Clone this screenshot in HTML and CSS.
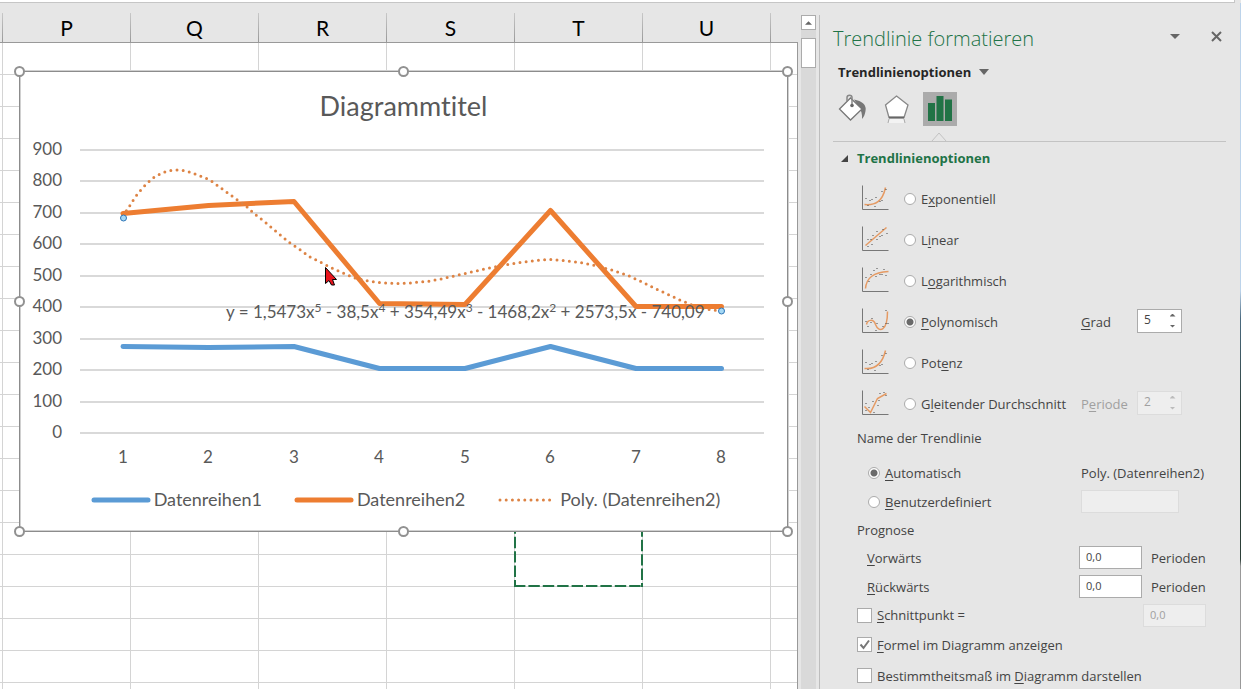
FILE: index.html
```html
<!DOCTYPE html>
<html lang="de">
<head>
<meta charset="utf-8">
<title>Trendlinie formatieren</title>
<link rel="stylesheet" href="styles.css">
</head>
<body>
<div class="app">
  <div class="formula-strip"></div>
  <div class="workspace">
    <main class="sheet">
      <div class="columns">
        <span class="col">P</span><span class="col">Q</span><span class="col">R</span><span class="col">S</span><span class="col">T</span><span class="col">U</span><span class="col"></span>
      </div>
      <div class="cells">
        <svg class="marquee" viewBox="0 0 132 76" aria-hidden="true">
          <path d="M2 0V74" stroke-dasharray="11.400 3" stroke-dashoffset="5"/>
          <path d="M1 73H130" stroke-dasharray="11.400 3"/>
          <path d="M129 0V74" stroke-dasharray="11.400 3" stroke-dashoffset="2"/>
        </svg>
        <section class="chart" aria-label="Diagramm">
          <h2 class="chart-title">Diagrammtitel</h2>
          <svg class="plot" viewBox="20 136 767 340">
            <g class="gridlines">
              <path d="M80 150H764M80 181H764M80 213H764M80 244H764M80 276H764M80 307H764M80 339H764M80 370H764M80 402H764M80 433H764"/>
            </g>
            <g class="axis axis-y">
              <text x="62" y="155">900</text><text x="62" y="186">800</text><text x="62" y="218">700</text><text x="62" y="249">600</text><text x="62" y="281">500</text><text x="62" y="312">400</text><text x="62" y="344">300</text><text x="62" y="375">200</text><text x="62" y="407">100</text><text x="62" y="438">0</text>
            </g>
            <g class="axis axis-x">
              <text x="123" y="463">1</text><text x="208" y="463">2</text><text x="294" y="463">3</text><text x="379" y="463">4</text><text x="465" y="463">5</text><text x="550" y="463">6</text><text x="636" y="463">7</text><text x="721" y="463">8</text>
            </g>
            <polyline class="series blue" points="123,346.5 208.5,347.5 294,346.5 379.5,368.5 465,368.5 550.5,346.5 636,368.5 721.5,368.5"/>
            <polyline class="series orange" points="123,213.5 208.5,205.5 294,201.5 379.5,303.5 465,304.5 550.5,210.5 636,306.5 721.5,306.5"/>
            <polyline class="trend" points="123,216 125.5,212 129,207 132,202 136,196 140,191 144,186.5 148,182.5 153,178 158,175 163,172.5 169,170.7 176,170 182,170.3 188,171.5 199,175.5 210,180 225,191 236,199 246,206 254,213.5 265,222 275,230.5 290,243 299,249 310,257 321,262.5 332,268 343,273 355,278 367,280.7 380,282.7 398,283.5 409,283 427,281.5 441,279 465,273.5 488,268.3 505,265 520,262.5 537,260.3 550,259.5 562,260.3 580,262.5 593,265 610,269.5 627,275 642,282 654,288 666,293.5 680,300 692,305 705,309 721,311"/>
            <text class="equation" x="226" y="318">y = 1,5473x<tspan class="sup" dy="-6">5</tspan><tspan dy="6"> - 38,5x</tspan><tspan class="sup" dy="-6">4</tspan><tspan dy="6"> + 354,49x</tspan><tspan class="sup" dy="-6">3</tspan><tspan dy="6"> - 1468,2x</tspan><tspan class="sup" dy="-6">2</tspan><tspan dy="6"> + 2573,5x - 740,09</tspan></text>
            <circle class="endpoint" cx="123.5" cy="218" r="3"/>
            <circle class="endpoint" cx="721.5" cy="311" r="3"/>
            <path class="pointer" d="M325.500 267.500V283.500L329 280.500L331.500 285H334.500L332.500 279.500H336.500Z"/>
          </svg>
          <div class="legend">
            <span class="entry"><svg class="key" viewBox="0 0 60 6"><path class="series blue" d="M3 3H57"/></svg>Datenreihen1</span>
            <span class="entry"><svg class="key" viewBox="0 0 60 6"><path class="series orange" d="M3 3H57"/></svg>Datenreihen2</span>
            <span class="entry"><svg class="key" viewBox="0 0 60 6"><path class="trend" d="M3 3H56"/></svg>Poly. (Datenreihen2)</span>
          </div>
          <i class="handle top left"></i><i class="handle top center"></i><i class="handle top right"></i>
          <i class="handle middle left"></i><i class="handle middle right"></i>
          <i class="handle bottom left"></i><i class="handle bottom center"></i><i class="handle bottom right"></i>
        </section>
      </div>
    </main>
    <div class="scrollbar">
      <button class="scroll-up" type="button" aria-label="Nach oben"><svg viewBox="0 0 8 4"><path d="M0 4L4 0L8 4Z"/></svg></button>
      <div class="thumb"></div>
    </div>
    <aside class="pane">
      <header class="pane-head">
        <h1>Trendlinie formatieren</h1>
        <button class="menu-btn" type="button" aria-label="Optionen"><svg width="10" height="6" viewBox="0 0 10 6"><path d="M0 0H10L5 5Z" fill="#666"/></svg></button>
        <button class="close-btn" type="button" aria-label="Schließen"><svg width="11" height="11" viewBox="0 0 11 11"><path d="M1 1L10 10M10 1L1 10" stroke="#666" stroke-width="2"/></svg></button>
      </header>
      <button class="category" type="button">Trendlinienoptionen <svg width="10" height="7" viewBox="0 0 10 7"><path d="M0 0H10L5 6Z" fill="#666"/></svg></button>
      <nav class="tabs">
        <button class="tab" type="button" aria-label="Füllung und Linie">
          <svg width="34" height="34" viewBox="-2 0 34 34">
            <path d="M17 7.500C25 9 30 13 28.500 19C28 22 27 25 25 27C25.500 22 24 18 22 15Z" fill="#777"/>
            <path d="M13.500 6L25 17L13.500 28L2.500 17Z" fill="#fff" stroke="#777" stroke-width="1.300"/>
            <path d="M10 10V5.500C10 2.500 15 2.500 15 5.500V13" fill="none" stroke="#888" stroke-width="1.500"/>
            <circle cx="15" cy="13.500" r="1.800" fill="#666"/>
          </svg>
        </button>
        <button class="tab" type="button" aria-label="Effekte">
          <svg width="34" height="34" viewBox="-1 0 34 34">
            <path d="M9.500 26L8.500 31H24.500L23.500 26Z" fill="#f3f3f3"/>
            <path d="M9 27L8 31M24 27L25 31" stroke="#aaa"/>
            <path d="M16.500 4L28 13L24 25.500H9L5.500 13Z" fill="#fff" stroke="#888" stroke-width="1.300"/>
            <path d="M9 25.500H24" stroke="#666" stroke-width="2"/>
          </svg>
        </button>
        <button class="tab active" type="button" aria-label="Trendlinienoptionen">
          <svg width="34" height="34" viewBox="0 0 34 34"><path d="M5 11H12V29H5ZM13.500 4H20.500V29H13.500ZM22 7.500H29V29H22Z" fill="#217346"/></svg>
        </button>
      </nav>
      <svg class="notch" viewBox="0 0 16 10" aria-hidden="true"><path d="M1 9L8 1L15 9" /></svg>
      <button class="section-head" type="button"><svg width="7" height="7" viewBox="0 0 7 7"><path d="M7 0V7H0Z" fill="#444"/></svg>Trendlinienoptionen</button>

      <div class="types">
        <div class="type-row">
          <svg class="mini" viewBox="-0.500 -0.500 27 26"><path class="ax" d="M1 1V25H27"/><path class="cv" d="M3 20C14 21 21 17 24 3"/><path class="dt" d="M4 14h1M8 16h1M10 15h1M14 13h1M6 21h1M13 22h1M18 17h1M20 7h1M20 16h1M24 5h1"/></svg>
          <label><input type="radio" name="type"><span>E<u>x</u>ponentiell</span></label>
        </div>
        <div class="type-row">
          <svg class="mini" viewBox="-0.500 -0.500 27 26"><path class="ax" d="M1 1V25H27"/><path class="cv" d="M4 20L25 2"/><path class="dt" d="M6 14h1M9 14h1M11 10h1M15 6h1M6 21h1M10 19h1M15 14h1M18 11h1M20 10h1M21 4h1M25 8h1"/></svg>
          <label><input type="radio" name="type"><span>L<u>i</u>near</span></label>
        </div>
        <div class="type-row">
          <svg class="mini" viewBox="-0.500 -0.500 27 26"><path class="ax" d="M1 1V25H27"/><path class="cv" d="M4 22C5 11 12 6 27 5"/><path class="dt" d="M4 11h1M7 15h1M9 8h1M12 4h1M15 2h1M14 10h1M18 8h1M20 8h1M22 3h1M24 9h1"/></svg>
          <label><input type="radio" name="type"><span>L<u>o</u>garithmisch</span></label>
        </div>
        <div class="type-row">
          <svg class="mini" viewBox="-0.500 -0.500 27 26"><path class="ax" d="M1 1V25H27"/><path class="cv" d="M5 17C6 12 12 11 14 17C17 25 26 25 26 4"/><path class="dt" d="M4 14h1M6 19h1M10 11h1M9 15h1M15 16h1M14 23h1M21 19h1M24 16h1M24 3h1M27 16h-1"/></svg>
          <label><input type="radio" name="type" checked><span><u>P</u>olynomisch</span></label>
          <label class="side" for="grad"><u>G</u>rad</label>
          <div class="stepper"><input id="grad" type="text" value="5"><button class="up" type="button" aria-label="Mehr"></button><button class="down" type="button" aria-label="Weniger"></button></div>
        </div>
        <div class="type-row">
          <svg class="mini" viewBox="-0.500 -0.500 27 26"><path class="ax" d="M1 1V25H27"/><path class="cv" d="M3 20C14 21 21 15 24 2"/><path class="dt" d="M4 14h1M8 16h1M10 15h1M14 13h1M6 21h1M13 22h1M18 17h1M20 7h1M20 16h1M24 5h1"/></svg>
          <label><input type="radio" name="type"><span>Pot<u>e</u>nz</span></label>
        </div>
        <div class="type-row">
          <svg class="mini" viewBox="-0.500 -0.500 27 26"><path class="ax" d="M1 1V25H27"/><path class="cv" d="M3 17L9 23L16 9L25 4"/><path class="dt" d="M4 14h1M7 18h1M4 21h1M11 12h1M12 23h1M16 16h1M17 11h1M18 4h1M22 3h1M24 6h1"/></svg>
          <label><input type="radio" name="type"><span>G<u>l</u>eitender Durchschnitt</span></label>
          <label class="side off" for="periode">P<u>e</u>riode</label>
          <div class="stepper off"><input id="periode" type="text" value="2" disabled><button class="up" type="button" aria-label="Mehr" disabled></button><button class="down" type="button" aria-label="Weniger" disabled></button></div>
        </div>
      </div>

      <h3 class="group">Name der Trendlinie</h3>
      <div class="rows name-rows">
        <div class="row">
          <label><input type="radio" name="name" checked><span><u>A</u>utomatisch</span></label>
          <span class="auto-name">Poly. (Datenreihen2)</span>
        </div>
        <div class="row">
          <label><input type="radio" name="name"><span><u>B</u>enutzerdefiniert</span></label>
          <input class="box custom-name" type="text" aria-label="Name" disabled>
        </div>
      </div>
      <h3 class="group forecast">Prognose</h3>
      <div class="rows">
        <div class="row"><label for="vor"><span><u>V</u>orwärts</span></label><input class="box" id="vor" type="text" value="0,0"><span class="unit">Perioden</span></div>
        <div class="row"><label for="rueck"><span><u>R</u>ückwärts</span></label><input class="box" id="rueck" type="text" value="0,0"><span class="unit">Perioden</span></div>
      </div>
      <div class="checks">
        <div class="check-row first"><label><input type="checkbox"><span><u>S</u>chnittpunkt =</span></label><input class="box" type="text" value="0,0" aria-label="Schnittpunkt" disabled></div>
        <div class="check-row"><label><input type="checkbox" checked><span><u>F</u>ormel im Diagramm anzeigen</span></label></div>
        <div class="check-row"><label><input type="checkbox"><span>Bestimmtheitsmaß im <u>D</u>iagramm darstellen</span></label></div>
      </div>
    </aside>
  </div>
</div>
</body>
</html>
```
FILE: styles.css
```css
* { box-sizing: border-box; }
body {
  margin: 0;
  background: #e6e6e6;
  color: #444;
  font-family: "Open Sans", "Noto Sans", sans-serif;
  font-size: 13px;
  line-height: 18px;
}
button {
  margin: 0;
  padding: 0;
  border: 0;
  background: none;
  color: inherit;
  font: inherit;
}
h1, h2, h3 { margin: 0; font-weight: 400; }
svg { display: block; }
u { text-underline-offset: 2px; }

.app {
  display: flex;
  flex-direction: column;
  height: 100vh;
  overflow: hidden;
}
.formula-strip {
  flex: none;
  height: 3px;
  margin-right: 6px;
  background: #fff;
  border-right: 1px solid #c6c6c6;
  border-bottom: 1px solid #c6c6c6;
}
.workspace { flex: 1; display: flex; min-height: 0; }

/* worksheet */
.sheet {
  flex: 1;
  min-width: 0;
  display: flex;
  flex-direction: column;
  font-family: Lato, "Open Sans", sans-serif;
  font-variant-ligatures: none;
}
.columns {
  flex: none;
  display: flex;
  height: 40px;
  padding: 10px 0 0 2px;
  border-bottom: 1px solid #999;
  overflow: hidden;
}
.col {
  flex: none;
  width: 128px;
  padding: 1px 0 0 1px;
  background: linear-gradient(#c8c8c8, #999) left / 1px 100% no-repeat;
  color: #000;
  font-size: 21px;
  line-height: 28px;
  text-align: center;
}
.cells {
  flex: 1;
  position: relative;
  overflow: hidden;
  border-right: 1px solid #999;
  background:
    repeating-linear-gradient(90deg, #d4d4d4 0 1px, transparent 1px 128px) 2px 0,
    repeating-linear-gradient(transparent 0 31px, #d4d4d4 31px 32px),
    #fff;
}
.marquee {
  position: absolute;
  left: 513px;
  top: 470px;
  width: 132px;
  height: 76px;
  fill: none;
  stroke: #217346;
  stroke-width: 2;
}

/* chart object floating on the worksheet */
.chart {
  position: absolute;
  left: 19px;
  top: 28px;
  width: 769px;
  display: flex;
  flex-direction: column;
  background: #fff;
  border: 1px solid #8c8c8c;
  box-shadow: 1px -1px 0 #d0d0d0, inset 1px -1px 0 #d0d0d0;
  color: #595959;
  font-size: 18px;
}
.chart-title {
  height: 64px;
  padding-top: 16px;
  font-size: 27px;
  line-height: 36px;
  text-align: center;
}
.plot { width: 100%; }
.gridlines { stroke: #d9d9d9; stroke-width: 2; }
.axis, .equation { fill: #595959; font-size: 17px; }
.axis-y { text-anchor: end; }
.axis-x { text-anchor: middle; }
.sup { font-size: 12px; }
.series {
  fill: none;
  stroke-width: 5;
  stroke-linecap: round;
  stroke-linejoin: round;
}
.blue { stroke: #5b9bd5; }
.orange { stroke: #ed7d31; }
.trend {
  fill: none;
  stroke: #dd8344;
  stroke-width: 3;
  stroke-linecap: round;
  stroke-dasharray: 0 6.200;
}
.endpoint { fill: #a4d8f5; stroke: #2e75b6; }
.pointer { fill: #e8141c; stroke: #000; }
.legend {
  display: flex;
  justify-content: center;
  gap: 32px;
  height: 55px;
  padding: 14px 0 0 4px;
}
.entry { display: flex; gap: 3px; line-height: 18px; }
.key { width: 60px; height: 6px; margin-top: 7px; }
.handle {
  position: absolute;
  width: 11px;
  height: 11px;
  border: 2px solid #919191;
  border-radius: 50%;
  background: #fff;
}
.handle.top { top: -6px; }
.handle.middle { top: calc(50% - 6px); }
.handle.bottom { bottom: -6px; }
.handle.left { left: -6px; }
.handle.center { left: calc(50% - 6px); }
.handle.right { right: -6px; }

/* vertical scrollbar */
.scrollbar {
  flex: none;
  width: 22px;
  margin-top: 12px;
  padding: 0 3px;
  border-right: 1px solid #bdbdbd;
  background: linear-gradient(#d9d9d9, #d9d9d9) 3px 0 / 15px 100% no-repeat;
}
.scroll-up, .thumb {
  display: block;
  width: 15px;
  background: #fff;
  border: 1px solid #ababab;
}
.scroll-up { height: 15px; padding: 0 3px; }
.scroll-up path { fill: #666; }
.scroll-up svg { width: 7px; height: 4px; }
.thumb { height: 30px; margin-top: 8px; }

/* formatting pane */
.pane {
  flex: none;
  width: 421px;
  padding-left: 13px;
  overflow: hidden;
  border-right: 1px solid;
  border-image: linear-gradient(#bcd3ea 0 42%, #4a6a80 46%, #2c3f38 60% 81%, #999 82%) 1;
}
.pane-head {
  display: flex;
  align-items: center;
  height: 52px;
  padding: 20px 18px 0 0;
}
.pane-head h1 {
  flex: 1;
  color: #217346;
  font-size: 20px;
  font-weight: 300;
  line-height: 32px;
}
.menu-btn { margin: 0 31px 4px 0; }
.close-btn { margin-bottom: 6px; }
.category {
  display: flex;
  align-items: center;
  gap: 8px;
  height: 34px;
  padding-left: 5px;
  color: #262626;
  font-weight: 700;
}
.tabs { display: flex; gap: 10px; margin-top: 3px; padding-left: 2px; }
.tab { width: 34px; height: 34px; }
.tab.active { background: #ababab; }
.notch {
  width: 16px;
  height: 10px;
  margin: 6px 0 0 98px;
  fill: #e6e6e6;
  stroke: #c3c3c3;
  position: relative;
}
.section-head {
  display: flex;
  align-items: center;
  gap: 9px;
  width: 393px;
  height: 33px;
  margin-top: -1px;
  padding-left: 8px;
  border-top: 1px solid #c3c3c3;
  color: #217346;
  font-weight: 700;
}
.types { margin-top: 4px; padding-left: 28px; }
.type-row { display: flex; align-items: center; height: 41px; }
.mini {
  width: 27px;
  height: 26px;
  margin: 0 16px 3px 0;
  fill: none;
  overflow: visible;
}
.ax { stroke: #777; stroke-width: 1; }
.cv { stroke: #e59a63; stroke-width: 1.500; }
.dt { stroke: #444; stroke-width: 1; }
label { display: flex; align-items: center; }
.type-row > label:first-of-type { width: 177px; }
.side { width: 56px; white-space: pre; }
.off { color: #a0a0a0; }
input { font: inherit; color: #444; }
input[type="radio"], input[type="checkbox"] {
  appearance: none;
  flex: none;
  margin: 0 5px 0 0;
  border: 1px solid #ababab;
  background: #fff;
}
input[type="radio"] { width: 12px; height: 12px; border-radius: 50%; }
input[type="radio"]:checked {
  background: radial-gradient(circle, #6a6a6a 0 3px, #fff 4px);
}
input[type="checkbox"] { width: 15px; height: 15px; }
input[type="checkbox"]:checked {
  background: url("data:image/svg+xml,%3Csvg xmlns='http://www.w3.org/2000/svg' viewBox='0 0 13 13'%3E%3Cpath d='M2.500 6.500L5.500 10L11 2.500' fill='none' stroke='%23777' stroke-width='2'/%3E%3C/svg%3E") center no-repeat #fff;
}
.stepper {
  display: grid;
  grid-template: 1fr 1fr / 1fr 17px;
  width: 45px;
  height: 24px;
  margin-bottom: 2px;
  border: 1px solid #ababab;
  background: #fff;
}
.stepper input {
  grid-row: span 2;
  width: 100%;
  padding: 0 0 2px 6px;
  border: 0;
  background: none;
  font-size: 12px;
}
.stepper button::before {
  content: "";
  display: block;
  width: 6px;
  height: 3px;
  margin: 0 auto;
  background: #666;
}
.stepper .up::before { clip-path: polygon(50% 0, 100% 100%, 0 100%); }
.stepper .down::before { clip-path: polygon(0 0, 100% 0, 50% 100%); }
.stepper.off { border-color: #dcdcdc; background: #eee; }
.stepper.off input { color: #a0a0a0; }
.stepper.off button::before { background: #bbb; }
.group {
  height: 28px;
  padding-left: 24px;
  font-size: 13px;
  line-height: 28px;
}
.group.forecast { height: 27px; }
.rows { padding-left: 34px; }
.name-rows { margin-top: 6px; }
.row { display: flex; align-items: center; height: 29px; }
.row > label { width: 212px; }
.name-rows .row > label { width: 214px; padding-left: 1px; }
.box {
  width: 63px;
  height: 23px;
  padding: 0 6px 2px;
  border: 1px solid #ababab;
  background: #fff;
  font-size: 11px;
}
.box:disabled { border-color: #dcdcdc; background: #eee; color: #a0a0a0; }
.custom-name { width: 98px; }
.unit { margin-left: 9px; }
.checks { padding-left: 24px; }
.check-row { display: flex; align-items: center; height: 31px; }
.check-row.first { height: 28px; }
.check-row.first label { width: 286px; }
```
